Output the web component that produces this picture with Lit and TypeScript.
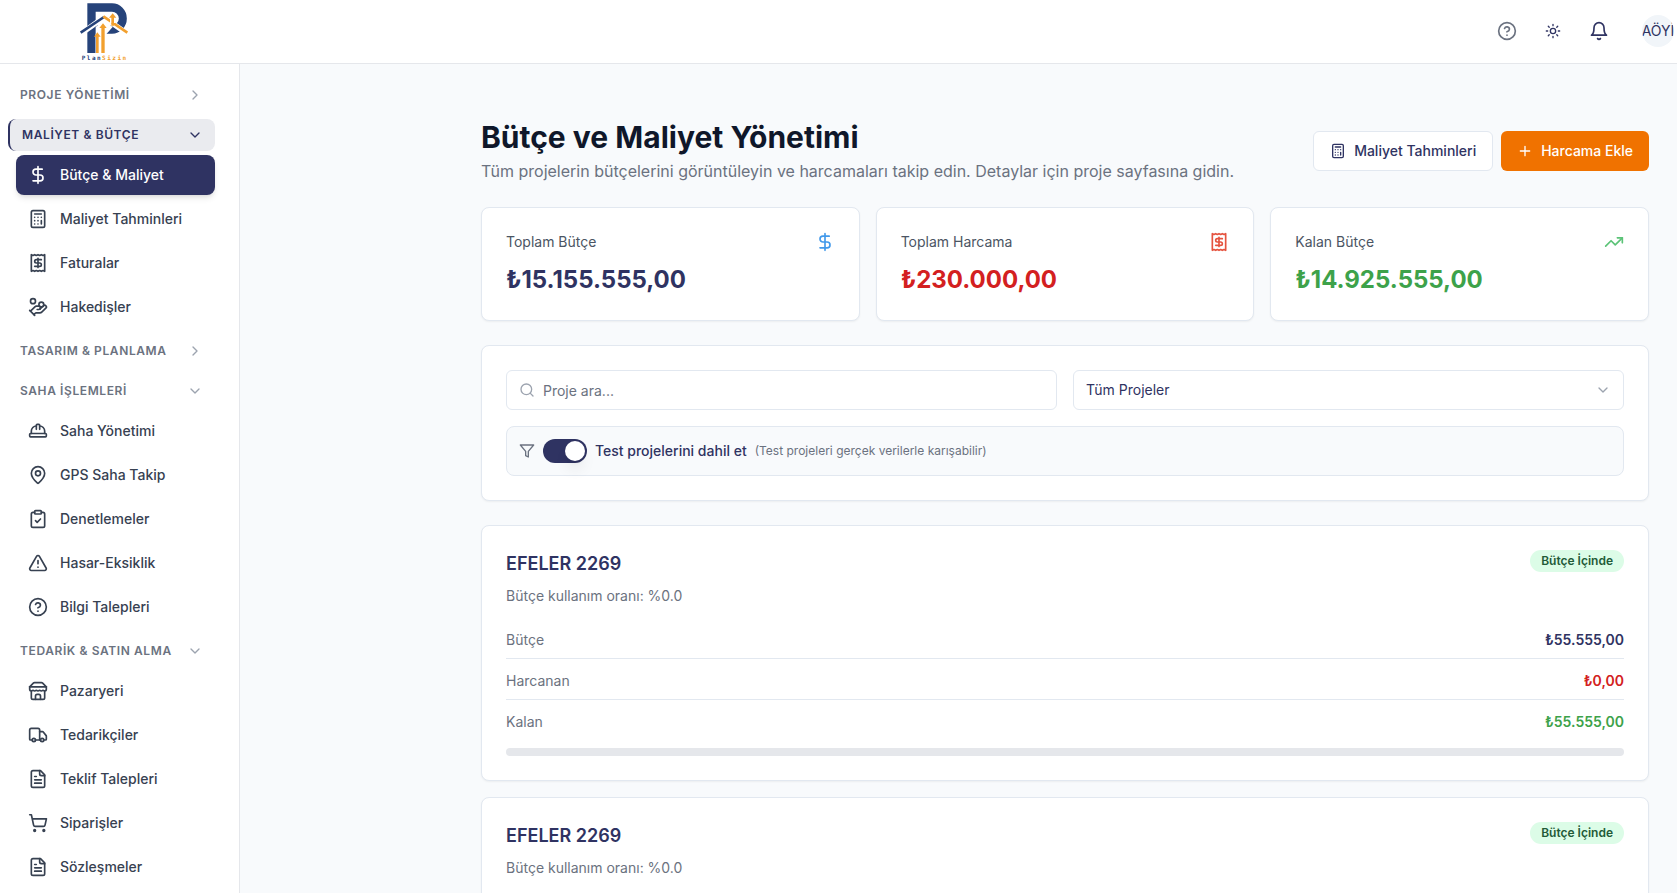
import { LitElement, html, svg, css, nothing, type SVGTemplateResult } from "lit";
import { customElement, property, state } from "lit/decorators.js";
import { classMap } from "lit/directives/class-map.js";
import { styleMap } from "lit/directives/style-map.js";

const ICONS: Record<string, SVGTemplateResult> = {
  dollar: svg`<path d="M12 2v20"/><path d="M17 5H9.5a3.5 3.5 0 0 0 0 7h5a3.5 3.5 0 0 1 0 7H6"/>`,
  calculator: svg`<rect x="4" y="2" width="16" height="20" rx="2"/><path d="M8 6h8M16 14v4M16 10h.01M12 10h.01M8 10h.01M12 14h.01M8 14h.01M12 18h.01M8 18h.01"/>`,
  receipt: svg`<path d="M4 2v20l2-1 2 1 2-1 2 1 2-1 2 1 2-1 2 1V2l-2 1-2-1-2 1-2-1-2 1-2-1-2 1Z"/><path d="M16 8h-6a2 2 0 1 0 0 4h4a2 2 0 1 1 0 4H8"/><path d="M12 17.5v-11"/>`,
  coins: svg`<path d="M11 15h2a2 2 0 1 0 0-4h-3c-.6 0-1.1.2-1.4.6L3 17"/><path d="m7 21 1.6-1.4c.3-.4.8-.6 1.4-.6h4c1.1 0 2.1-.4 2.8-1.2l4.6-4.4a2 2 0 0 0-2.75-2.91l-4.2 3.9"/><path d="m2 16 6 6"/><circle cx="16" cy="9" r="2.9"/><circle cx="6" cy="5" r="3"/>`,
  hat: svg`<path d="M2 18a1 1 0 0 0 1 1h18a1 1 0 0 0 1-1v-2a1 1 0 0 0-1-1H3a1 1 0 0 0-1 1v2z"/><path d="M10 10V5a1 1 0 0 1 1-1h2a1 1 0 0 1 1 1v5"/><path d="M4 15v-3a6 6 0 0 1 6-6"/><path d="M14 6a6 6 0 0 1 6 6v3"/>`,
  pin: svg`<path d="M20 10c0 4.993-5.539 10.193-7.399 11.799a1 1 0 0 1-1.202 0C9.539 20.193 4 14.993 4 10a8 8 0 0 1 16 0"/><circle cx="12" cy="10" r="3"/>`,
  clipboard: svg`<rect x="8" y="2" width="8" height="4" rx="1"/><path d="M16 4h2a2 2 0 0 1 2 2v14a2 2 0 0 1-2 2H6a2 2 0 0 1-2-2V6a2 2 0 0 1 2-2h2"/><path d="m9 14 2 2 4-4"/>`,
  alert: svg`<path d="m21.73 18-8-14a2 2 0 0 0-3.48 0l-8 14A2 2 0 0 0 4 21h16a2 2 0 0 0 1.73-3"/><path d="M12 9v4M12 17h.01"/>`,
  help: svg`<circle cx="12" cy="12" r="10"/><path d="M9.09 9a3 3 0 0 1 5.83 1c0 2-3 3-3 3"/><path d="M12 17h.01"/>`,
  store: svg`<path d="m2 7 4.41-4.41A2 2 0 0 1 7.83 2h8.34a2 2 0 0 1 1.42.59L22 7"/><path d="M4 12v8a2 2 0 0 0 2 2h12a2 2 0 0 0 2-2v-8"/><path d="M15 22v-4a2 2 0 0 0-2-2h-2a2 2 0 0 0-2 2v4"/><path d="M2 7h20"/><path d="M22 7v3a2 2 0 0 1-2 2a2.7 2.7 0 0 1-1.59-.63.7.7 0 0 0-.82 0A2.7 2.7 0 0 1 16 12a2.7 2.7 0 0 1-1.59-.63.7.7 0 0 0-.82 0A2.7 2.7 0 0 1 12 12a2.7 2.7 0 0 1-1.59-.63.7.7 0 0 0-.82 0A2.7 2.7 0 0 1 8 12a2.7 2.7 0 0 1-1.59-.63.7.7 0 0 0-.82 0A2.7 2.7 0 0 1 4 12a2 2 0 0 1-2-2V7"/>`,
  truck: svg`<path d="M14 18V6a2 2 0 0 0-2-2H4a2 2 0 0 0-2 2v11a1 1 0 0 0 1 1h2"/><path d="M15 18H9"/><path d="M19 18h2a1 1 0 0 0 1-1v-3.65a1 1 0 0 0-.22-.624l-3.48-4.35A1 1 0 0 0 17.52 8H14"/><circle cx="17" cy="18" r="2"/><circle cx="7" cy="18" r="2"/>`,
  file: svg`<path d="M15 2H6a2 2 0 0 0-2 2v16a2 2 0 0 0 2 2h12a2 2 0 0 0 2-2V7Z"/><path d="M14 2v4a2 2 0 0 0 2 2h4"/><path d="M10 9H8M16 13H8M16 17H8"/>`,
  cart: svg`<circle cx="8" cy="21" r="1"/><circle cx="19" cy="21" r="1"/><path d="M2.05 2.05h2l2.66 12.42a2 2 0 0 0 2 1.58h9.78a2 2 0 0 0 1.95-1.57l1.65-7.43H5.12"/>`,
  right: svg`<path d="m9 18 6-6-6-6"/>`,
  down: svg`<path d="m6 9 6 6 6-6"/>`,
  sun: svg`<circle cx="12" cy="12" r="4"/><path d="M12 2v2M12 20v2M4.93 4.93l1.41 1.41M17.66 17.66l1.41 1.41M2 12h2M20 12h2M6.34 17.66l-1.41 1.41M19.07 4.93l-1.41 1.41"/>`,
  bell: svg`<path d="M6 8a6 6 0 0 1 12 0c0 7 3 9 3 9H3s3-2 3-9"/><path d="M10.3 21a1.94 1.94 0 0 0 3.4 0"/>`,
  plus: svg`<path d="M5 12h14M12 5v14"/>`,
  trend: svg`<path d="m22 7-8.5 8.5-5-5L2 17"/><path d="M16 7h6v6"/>`,
  search: svg`<circle cx="11" cy="11" r="8"/><path d="m21 21-4.3-4.3"/>`,
  filter: svg`<path d="M22 3H2l8 9.46V19l4 2v-8.54L22 3z"/>`,
};

@customElement("ui-icon")
class UiIcon extends LitElement {
  @property() name = "";
  @property({ type: Number }) size = 20;

  static styles = css`
    :host { display: block; flex: none; }
    svg { display: block; }
  `;

  render() {
    return html`<svg width=${this.size} height=${this.size} viewBox="0 0 24 24" fill="none" stroke="currentColor"
      stroke-width="2" stroke-linecap="round" stroke-linejoin="round" aria-hidden="true">${ICONS[this.name]}</svg>`;
  }
}

@customElement("brand-logo")
class BrandLogo extends LitElement {
  static styles = css`
    :host { display: block; }
    svg { display: block; }
    text { font: 700 18px "DejaVu Sans Mono", monospace; letter-spacing: 0.25em; }
    .navy { fill: #26437a; }
    .gold { fill: #f2a02e; }
    .line { fill: none; stroke-width: 8; }
    .halo { fill: none; stroke: #fff; stroke-width: 16; }
    .navy-line { stroke: #26437a; }
    .gold-line { stroke: #f2a02e; }
  `;

  render() {
    return html`<svg width="51" height="62" viewBox="54 3 153 186" role="img" aria-label="PlanSizin">
      <path class="navy" fill-rule="evenodd" d="M82 13H156a44 45 0 0 1 0 91H107V162H82ZM107 38V79H156a20 20 0 0 0 0-41Z" />
      <path d="M107 84 132 64 158 84 140 104V162H107Z" fill="#fff" />
      <path class="halo" d="M60 106 132 55 204 106" />
      <path class="line navy-line" d="M62 101 132 54" />
      <path class="line gold-line" d="M130 52 202 101" />
      <path class="halo" d="M158 72V50" />
      <path class="gold" d="M154 80V56H147L158 43 169 56H162V80Z" />
      <path class="gold" d="M108 162V113H102L112 100 122 113H116V162Z" />
      <path class="gold" d="M124 162V87H118L129 73 140 87H134V162Z" />
      <text x="65" y="184"><tspan class="navy">Plan</tspan><tspan class="gold">Sizin</tspan></text>
    </svg>`;
  }
}

interface NavItem { label: string; icon: string; active?: boolean; }
interface NavGroup { label: string; open: boolean; active?: boolean; items: NavItem[]; }

@customElement("side-nav")
class SideNav extends LitElement {
  @state() groups: NavGroup[] = [
    { label: "PROJE YÖNETİMİ", open: false, items: [] },
    {
      label: "MALİYET & BÜTÇE", open: true, active: true, items: [
        { label: "Bütçe & Maliyet", icon: "dollar", active: true },
        { label: "Maliyet Tahminleri", icon: "calculator" },
        { label: "Faturalar", icon: "receipt" },
        { label: "Hakedişler", icon: "coins" },
      ],
    },
    { label: "TASARIM & PLANLAMA", open: false, items: [] },
    {
      label: "SAHA İŞLEMLERİ", open: true, items: [
        { label: "Saha Yönetimi", icon: "hat" },
        { label: "GPS Saha Takip", icon: "pin" },
        { label: "Denetlemeler", icon: "clipboard" },
        { label: "Hasar-Eksiklik", icon: "alert" },
        { label: "Bilgi Talepleri", icon: "help" },
      ],
    },
    {
      label: "TEDARİK & SATIN ALMA", open: true, items: [
        { label: "Pazaryeri", icon: "store" },
        { label: "Tedarikçiler", icon: "truck" },
        { label: "Teklif Talepleri", icon: "file" },
        { label: "Siparişler", icon: "cart" },
        { label: "Sözleşmeler", icon: "file" },
      ],
    },
  ];

  static styles = css`
    :host {
      display: block; box-sizing: border-box; width: 240px; flex: none;
      background: #fff; border-right: 1px solid #e5e7eb;
      overflow-y: auto; scrollbar-width: none;
    }
    nav { display: flex; flex-direction: column; gap: 8px; padding: 15px 24px 8px 8px; }
    .group { display: flex; flex-direction: column; gap: 4px; }
    .head {
      display: flex; align-items: center; justify-content: space-between;
      height: 32px; padding: 0 12px; border: 0; border-radius: 8px; background: none;
      font: 600 12px/16px Inter, sans-serif; letter-spacing: 0.05em; color: #6b7280;
      text-align: left; cursor: pointer;
    }
    .head ui-icon { color: #9ca3af; }
    .head.active { background: #eaebef; color: #2f3362; border-left: 2px solid #2f3362; }
    .head.active ui-icon { color: #2f3362; }
    .items { display: flex; flex-direction: column; gap: 4px; margin: 0; padding: 0 0 0 8px; list-style: none; }
    a {
      display: flex; align-items: center; gap: 12px; height: 40px; padding: 0 12px;
      border-radius: 8px; color: #374151; text-decoration: none;
      font: 500 14px/20px Inter, sans-serif;
    }
    a.active { background: #2f3362; color: #fff; box-shadow: 0 4px 6px -1px #0000001a, 0 2px 4px -2px #0000001a; }
  `;

  private toggle(g: NavGroup) {
    g.open = !g.open;
    this.requestUpdate();
  }

  render() {
    return html`<nav aria-label="Ana menü">
      ${this.groups.map((g) => html`<div class="group">
        <button class=${classMap({ head: true, active: !!g.active })} aria-expanded=${g.open} @click=${() => this.toggle(g)}>
          <span>${g.label}</span><ui-icon name=${g.open ? "down" : "right"} size="16"></ui-icon>
        </button>
        ${g.open && g.items.length ? html`<ul class="items">
          ${g.items.map((i) => html`<li><a href="#" class=${classMap({ active: !!i.active })}>
            <ui-icon name=${i.icon}></ui-icon><span>${i.label}</span></a></li>`)}
        </ul>` : nothing}
      </div>`)}
    </nav>`;
  }
}

@customElement("project-card")
class ProjectCard extends LitElement {
  @property() name = "";
  @property() budget = "";
  @property() spent = "";
  @property() remaining = "";
  @property({ type: Number }) usage = 0;

  static styles = css`
    :host {
      display: block; padding: 24px; background: #fff; border: 1px solid #e2e8f0;
      border-radius: 8px; box-shadow: 0 1px 2px #0000000d;
    }
    header { display: flex; align-items: flex-start; justify-content: space-between; }
    h2 { margin: 0; font-size: 18px; line-height: 28px; font-weight: 600; color: #2f3362; }
    .badge {
      padding: 3px 11px; border-radius: 11px; background: #dcfce7; color: #235a37;
      font-size: 12px; line-height: 16px; font-weight: 600;
    }
    .usage { margin: 8px 0 16px; color: #6b7280; }
    dl { display: flex; flex-direction: column; gap: 4px; margin: 0 0 8px; }
    .row { display: flex; justify-content: space-between; padding: 8px 0; border-bottom: 1px solid #e2e8f0; }
    .row:last-child { border-bottom: 0; }
    dt { color: #6b7280; }
    dd { margin: 0; font-weight: 600; color: #2f3362; }
    .red { color: #d32020; }
    .green { color: #3da24a; }
    .track { height: 8px; border-radius: 4px; background: #e5e7eb; overflow: hidden; }
    .fill { height: 100%; background: #3da24a; }
  `;

  render() {
    return html`
      <header><h2>${this.name}</h2><span class="badge">Bütçe İçinde</span></header>
      <p class="usage">Bütçe kullanım oranı: %${this.usage.toFixed(1)}</p>
      <dl>
        <div class="row"><dt>Bütçe</dt><dd>${this.budget}</dd></div>
        <div class="row"><dt>Harcanan</dt><dd class="red">${this.spent}</dd></div>
        <div class="row"><dt>Kalan</dt><dd class="green">${this.remaining}</dd></div>
      </dl>
      <div class="track" role="progressbar" aria-valuenow=${this.usage} aria-valuemin="0" aria-valuemax="100">
        <div class="fill" style=${styleMap({ width: `${this.usage}%` })}></div>
      </div>`;
  }
}

@customElement("app-root")
class AppRoot extends LitElement {
  private stats = [
    { label: "Toplam Bütçe", value: "₺15.155.555,00", icon: "dollar", tone: "navy" },
    { label: "Toplam Harcama", value: "₺230.000,00", icon: "receipt", tone: "red" },
    { label: "Kalan Bütçe", value: "₺14.925.555,00", icon: "trend", tone: "green" },
  ];

  private projects = [
    { name: "EFELER 2269", budget: "₺55.555,00", spent: "₺0,00", remaining: "₺55.555,00", usage: 0 },
    { name: "EFELER 2269", budget: "₺55.555,00", spent: "₺0,00", remaining: "₺55.555,00", usage: 0 },
  ];

  static styles = css`
    :host {
      display: flex; flex-direction: column; height: 100vh; overflow: hidden;
      background: #f8fafc; color: #2f3362; font: 14px/20px Inter, sans-serif;
    }
    button { font: inherit; cursor: pointer; }
    .topbar {
      display: flex; align-items: center; justify-content: space-between; flex: none;
      box-sizing: border-box; height: 64px; padding: 0 3px 1px 78px;
      background: #fff; border-bottom: 1px solid #e5e7eb;
    }
    .tools { display: flex; align-items: center; gap: 10px; }
    .tool {
      display: flex; align-items: center; justify-content: center; width: 36px; height: 36px;
      padding: 0; border: 0; border-radius: 8px; background: none; color: #2f3362;
    }
    .tool.muted { color: #6b7280; }
    .avatar {
      display: flex; align-items: center; justify-content: center; width: 32px; height: 32px;
      margin-left: 15px; padding: 0; border: 0; border-radius: 16px; overflow: hidden;
      background: #f1f5f9; color: #2f3362;
    }
    .body { display: flex; flex: 1; min-height: 0; }
    main { flex: 1; min-width: 0; padding: 55px 28px 24px 241px; overflow-y: auto; scrollbar-width: none; }
    .title { display: flex; align-items: center; justify-content: space-between; gap: 24px; margin-bottom: 24px; }
    h1 { margin: 0 0 4px; font-size: 30px; line-height: 36px; font-weight: 700; color: #0f172a; }
    .lead { margin: 0; font-size: 16px; line-height: 24px; color: #6b7280; }
    .actions { display: flex; gap: 8px; flex: none; }
    .btn {
      display: flex; align-items: center; gap: 8px; box-sizing: border-box; height: 40px; padding: 0 16px;
      border: 1px solid #e2e8f0; border-radius: 6px; background: #fff; color: #2f3362; font-weight: 500;
    }
    .btn.primary { border: 0; background: #f07200; color: #fff; }
    .stats { display: grid; grid-template-columns: repeat(3, 1fr); gap: 16px; margin-bottom: 24px; }
    .card {
      padding: 24px; background: #fff; border: 1px solid #e2e8f0; border-radius: 8px;
      box-shadow: 0 1px 2px #0000000d;
    }
    .stat-head { display: flex; justify-content: space-between; margin-bottom: 12px; color: #4b5563; }
    .value { margin: 0; font-size: 24px; line-height: 32px; font-weight: 700; }
    .navy { color: #2f3362; }
    .red { color: #d32020; }
    .green { color: #3da24a; }
    .icon-navy { color: #4299ea; }
    .icon-red { color: #e5533f; }
    .icon-green { color: #5bc377; }
    .filters { display: grid; grid-template-columns: 1fr 1fr; gap: 16px; margin-bottom: 24px; }
    .field {
      display: flex; align-items: center; gap: 8px; box-sizing: border-box; height: 40px; padding: 0 12px;
      border: 1px solid #e2e8f0; border-radius: 6px; background: #fff; color: #9ca3af;
    }
    .field input, .field select {
      flex: 1; min-width: 0; height: 100%; margin: 0; padding: 0; border: 0; outline: 0; background: none;
      appearance: none; font: inherit; color: #2f3362;
    }
    .field input::placeholder { color: #6b7280; opacity: 1; }
    .toggle {
      grid-column: 1 / -1; display: flex; align-items: center; gap: 8px; padding: 12px;
      border: 1px solid #e2e8f0; border-radius: 8px; background: #f8fafc;
    }
    .toggle ui-icon { color: #6b7280; }
    .switch {
      appearance: none; box-sizing: border-box; display: flex; width: 44px; height: 24px; margin: 0; padding: 2px;
      border-radius: 12px; background: #e2e8f0; cursor: pointer;
    }
    .switch::before {
      content: ""; width: 20px; height: 20px; border-radius: 10px; background: #fff;
      box-shadow: 0 10px 15px -3px #0000001a, 0 4px 6px -4px #0000001a;
    }
    .switch:checked { justify-content: flex-end; background: #2f3362; }
    .toggle label { font-weight: 500; }
    .hint { font-size: 12px; line-height: 16px; color: #6b7280; }
    .projects { display: flex; flex-direction: column; gap: 16px; }
  `;

  render() {
    return html`
      <header class="topbar">
        <brand-logo></brand-logo>
        <div class="tools">
          <button class="tool muted" aria-label="Yardım"><ui-icon name="help"></ui-icon></button>
          <button class="tool" aria-label="Tema"><ui-icon name="sun" size="16"></ui-icon></button>
          <button class="tool" aria-label="Bildirimler"><ui-icon name="bell"></ui-icon></button>
          <button class="avatar">AÖYİ</button>
        </div>
      </header>
      <div class="body">
        <side-nav></side-nav>
        <main>
          <div class="title">
            <div>
              <h1>Bütçe ve Maliyet Yönetimi</h1>
              <p class="lead">Tüm projelerin bütçelerini görüntüleyin ve harcamaları takip edin. Detaylar için proje sayfasına gidin.</p>
            </div>
            <div class="actions">
              <button class="btn"><ui-icon name="calculator" size="16"></ui-icon>Maliyet Tahminleri</button>
              <button class="btn primary"><ui-icon name="plus" size="16"></ui-icon>Harcama Ekle</button>
            </div>
          </div>
          <section class="stats">
            ${this.stats.map((s) => html`<div class="card">
              <div class="stat-head"><span>${s.label}</span><ui-icon class="icon-${s.tone}" name=${s.icon}></ui-icon></div>
              <p class="value ${s.tone}">${s.value}</p>
            </div>`)}
          </section>
          <section class="card filters">
            <div class="field">
              <ui-icon name="search" size="16"></ui-icon>
              <input type="text" placeholder="Proje ara..." aria-label="Proje ara" />
            </div>
            <div class="field">
              <select aria-label="Proje"><option>Tüm Projeler</option></select>
              <ui-icon name="down" size="16"></ui-icon>
            </div>
            <div class="toggle">
              <ui-icon name="filter" size="16"></ui-icon>
              <input class="switch" id="test" type="checkbox" role="switch" checked />
              <label for="test">Test projelerini dahil et</label>
              <span class="hint">(Test projeleri gerçek verilerle karışabilir)</span>
            </div>
          </section>
          <section class="projects">
            ${this.projects.map((p) => html`<project-card .name=${p.name} .budget=${p.budget} .spent=${p.spent}
              .remaining=${p.remaining} .usage=${p.usage}></project-card>`)}
          </section>
        </main>
      </div>`;
  }
}
